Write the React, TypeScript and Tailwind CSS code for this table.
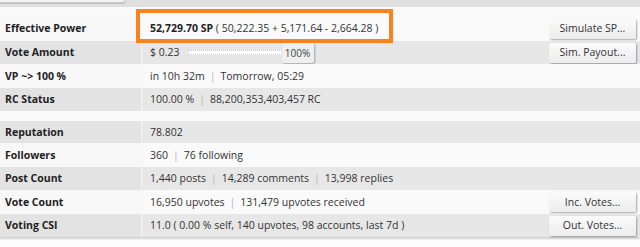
import type { ReactNode } from 'react';

type Row = {
  label: string;
  value: ReactNode;
  action?: string;
  h: string;
  shade: boolean;
};

const Sep = () => <span className="mx-[5px] text-[#b8b8b8]">|</span>;

function PayoutSlider() {
  return (
    <div className="ml-[8px] flex items-center">
      <div className="h-[5px] w-[94px] border-y border-dotted border-[#cfcfcf] bg-white" />
      <div className="flex h-[20px] w-[32px] items-center justify-center rounded-[2px] bg-[#efefef] text-[10px] text-[#444] shadow-[1px_1px_2px_rgba(0,0,0,0.3)]">
        100%
      </div>
    </div>
  );
}

const accountRows: Row[] = [
  {
    label: 'Effective Power',
    value: (
      <span>
        <b className="font-bold text-[#222]">52,729.70 SP</b> ( 50,222.35 + 5,171.64 - 2,664.28 )
      </span>
    ),
    action: 'Simulate SP...',
    h: 'h-[25px]',
    shade: false,
  },
  {
    label: 'Vote Amount',
    value: (
      <span className="flex items-center">
        $ 0.23
        <PayoutSlider />
      </span>
    ),
    action: 'Sim. Payout...',
    h: 'h-[23px]',
    shade: true,
  },
  {
    label: 'VP ~> 100 %',
    value: (
      <span>
        in 10h 32m<Sep />Tomorrow, 05:29
      </span>
    ),
    h: 'h-[24px]',
    shade: false,
  },
  {
    label: 'RC Status',
    value: (
      <span>
        100.00 %<Sep />88,200,353,403,457 RC
      </span>
    ),
    h: 'h-[23px]',
    shade: true,
  },
];

const socialRows: Row[] = [
  {
    label: 'Reputation',
    value: <span>78.802</span>,
    h: 'h-[22px]',
    shade: true,
  },
  {
    label: 'Followers',
    value: (
      <span>
        360<Sep />76 following
      </span>
    ),
    h: 'h-[24px]',
    shade: false,
  },
  {
    label: 'Post Count',
    value: (
      <span>
        1,440 posts<Sep />14,289 comments<Sep />13,998 replies
      </span>
    ),
    h: 'h-[23px]',
    shade: true,
  },
  {
    label: 'Vote Count',
    value: (
      <span>
        16,950 upvotes<Sep />131,479 upvotes received
      </span>
    ),
    action: 'Inc. Votes...',
    h: 'h-[24px]',
    shade: false,
  },
  {
    label: 'Voting CSI',
    value: <span>11.0 ( 0.00 % self, 140 upvotes, 98 accounts, last 7d )</span>,
    action: 'Out. Votes...',
    h: 'h-[23px]',
    shade: true,
  },
];

function InfoRow({ row }: { row: Row }) {
  return (
    <div className={`flex items-stretch ${row.h}`}>
      <div
        className={`flex w-[142px] shrink-0 items-center border-r border-[#f4f4f4] pl-[5px] font-bold text-[#222] ${
          row.shade ? 'bg-[#e3e3e3]' : 'bg-[#f8f8f8]'
        }`}
      >
        {row.label}
      </div>
      <div
        className={`flex flex-1 items-center justify-between pl-[8px] pr-[4px] text-[#333] ${
          row.shade ? 'bg-[#e7e7e7]' : 'bg-[#fafafa]'
        }`}
      >
        {row.value}
        {row.action && (
          <button
            type="button"
            className="h-[20px] w-[87px] rounded-[2px] bg-gradient-to-b from-[#fbfbfb] to-[#ececec] text-center text-[10.5px] text-[#333] shadow-[1px_1px_2px_rgba(0,0,0,0.35)]"
          >
            {row.action}
          </button>
        )}
      </div>
    </div>
  );
}

export default function App() {
  return (
    <div className="relative h-[247px] w-[640px] overflow-hidden bg-[#fdfdfd] font-['Open_Sans',sans-serif] text-[10.5px] leading-none">
      {/* tab strip */}
      <div className="h-[7px] bg-[#e0e0e0]">
        <div className="h-[3px] w-[125px] border-r border-b border-[#c8c8c8] bg-[#f2f2f2] shadow-[0_1px_1px_rgba(0,0,0,0.15)]" />
      </div>
      <div className="h-[9px] bg-[#fafafa]" />

      <div className="shadow-[0_2px_2px_rgba(0,0,0,0.18)]">
        {accountRows.map((row) => (
          <InfoRow key={row.label} row={row} />
        ))}
        <div className="h-[10px] bg-[#fafafa]" />
        {socialRows.map((row) => (
          <InfoRow key={row.label} row={row} />
        ))}
      </div>

      {/* highlight around effective power */}
      <div className="pointer-events-none absolute left-[136px] top-[9px] h-[34px] w-[257px] border-[4px] border-[#f7821f]" />
    </div>
  );
}
